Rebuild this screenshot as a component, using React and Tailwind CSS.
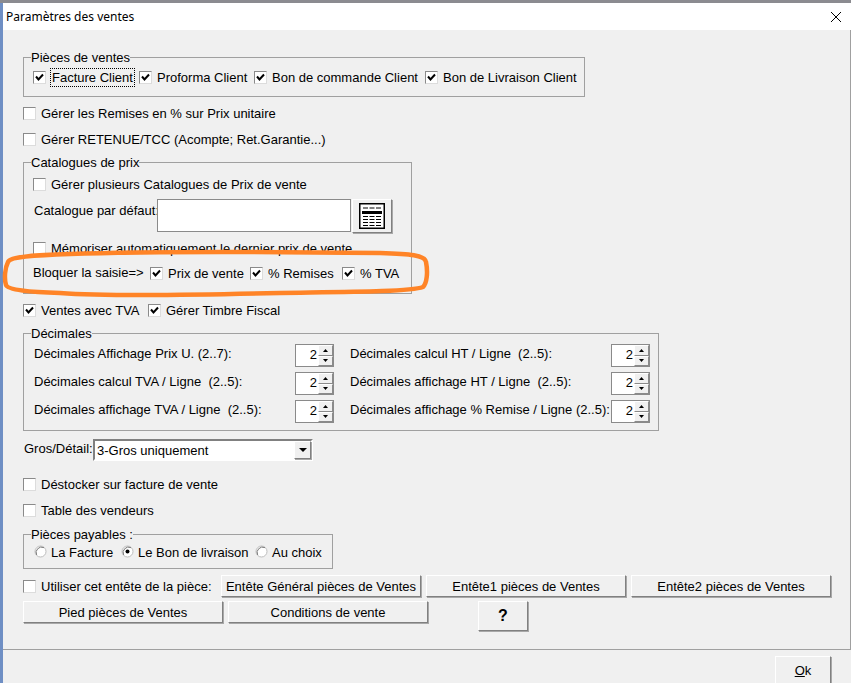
const FONT = { fontFamily: '"Liberation Sans", Arial, sans-serif' };

function Box({ checked }) {
  return (
    <span className="shrink-0 w-[13px] h-[13px] bg-white border border-t-[#8a8a8a] border-l-[#8a8a8a] border-r-[#dcdcdc] border-b-[#dcdcdc] flex items-center justify-center">
      {checked && (
        <svg width="9" height="9" viewBox="0 0 9 9">
          <path d="M1 3.5 L3.5 6.5 L8 1.5" fill="none" stroke="#000" strokeWidth="2" />
        </svg>
      )}
    </span>
  );
}

function Check({ label, checked, className = "", focus }) {
  return (
    <label className={"flex items-center h-5 whitespace-nowrap shrink-0 " + className}>
      <Box checked={checked} />
      {focus ? (
        <span className="ml-1 h-[19px] px-px pt-px flex items-center border border-dotted border-black">{label}</span>
      ) : (
        <span className="ml-[5px] pt-px">{label}</span>
      )}
    </label>
  );
}

function Radio({ label, checked, className = "" }) {
  return (
    <label className={"flex items-center h-5 whitespace-nowrap shrink-0 " + className}>
      <svg width="13" height="13" viewBox="0 0 13 13" className="shrink-0 -mt-[2px]">
        <circle cx="6.5" cy="6.5" r="5.5" fill="#fff" stroke="#bdbdbd" />
        <path d="M2.6 9.9 A5.5 5.5 0 0 1 9.9 2.6" fill="none" stroke="#777" />
        {checked && <circle cx="6.5" cy="6.5" r="2" fill="#000" />}
      </svg>
      <span className="ml-1 pt-px">{label}</span>
    </label>
  );
}

function Group({ title, className = "", inner = "pl-[9px]", children }) {
  return (
    <fieldset className={"border border-[#a0a0a0] " + className}>
      <legend className="ml-[7px] h-[15px] leading-[15px] whitespace-nowrap">{title}</legend>
      <div className={inner}>{children}</div>
    </fieldset>
  );
}

function Btn({ children, className = "" }) {
  return (
    <button className={"shrink-0 bg-[#f0f0f0] border border-t-white border-l-white border-r-[#808080] border-b-[#808080] shadow-[1px_1px_0_#a8a8a8] whitespace-nowrap flex items-center justify-center " + className}>
      {children}
    </button>
  );
}

function Spinner() {
  return (
    <div className="w-[39px] h-[23px] bg-white border border-[#8a8a8a] flex">
      <span className="flex-1 text-right pr-px leading-[20px]">2</span>
      <div className="w-[15px] flex flex-col">
        {[0, 1].map((i) => (
          <span key={i} className="flex-1 bg-[#f0f0f0] border border-t-white border-l-white border-r-[#8a8a8a] border-b-[#8a8a8a] flex items-center justify-center">
            <svg width="5" height="3" viewBox="0 0 5 3">
              <path d={i === 0 ? "M2.5 0 L5 3 L0 3 Z" : "M0 0 L5 0 L2.5 3 Z"} fill="#000" />
            </svg>
          </span>
        ))}
      </div>
    </div>
  );
}

function DecRow({ a, b }) {
  return (
    <>
      <span className="whitespace-pre pb-1 self-center">{a}</span>
      <Spinner />
      <span className="whitespace-pre pb-1 pl-4 self-center">{b}</span>
      <Spinner />
    </>
  );
}

export default function App() {
  return (
    <div className="w-[851px] h-[683px] overflow-hidden relative flex flex-col bg-[#f0f0f0] text-black text-[13px]" style={FONT}>
      <div className="h-[3px] bg-[#8b8b90] shrink-0" />
      <div className="flex-1 flex flex-col border-l-[3px] border-l-[#6f8fc4]">
        <div className="h-[27px] bg-white flex items-center justify-between pl-[3px] pr-[9px] shrink-0">
          <span className="text-[12px]" style={{ fontFamily: '"Noto Sans", "Open Sans", sans-serif' }}>Paramètres des ventes</span>
          <svg width="12" height="12" viewBox="0 0 12 12">
            <path d="M1 1 L11 11 M11 1 L1 11" stroke="#000" strokeWidth="1" />
          </svg>
        </div>

        <div className="h-[620px] shrink-0 flex flex-col pl-5 border-r border-b border-[#a0a0a0]">
          <Group title="Pièces de ventes" className="mt-5 w-[562px] h-[47px]">
            <div className="flex mt-[2px]">
              <Check checked focus label="Facture Client" className="w-[106px]" />
              <Check checked label="Proforma Client" className="w-[115px]" />
              <Check checked label="Bon de commande Client" className="w-[171px]" />
              <Check checked label="Bon de Livraison Client" />
            </div>
          </Group>

          <Check label="Gérer les Remises en % sur Prix unitaire" className="mt-[6px]" />
          <Check label="Gérer RETENUE/TCC (Acompte; Ret.Garantie...)" className="mt-[6px]" />

          <Group title="Catalogues de prix" className="mt-[6px] w-[389px] h-[139px]">
            <Check label="Gérer plusieurs Catalogues de Prix de vente" className="mt-1" />
            <div className="flex mt-[5px] h-[34px]">
              <span className="w-[124px] pl-px pt-[2px] whitespace-nowrap">Catalogue par défaut:</span>
              <div className="w-[194px] h-[33px] bg-white border border-[#8a8a8a]" />
              <Btn className="ml-px w-10 h-[34px]">
                <svg width="26" height="26" viewBox="0 0 26 26">
                  <rect x="0.75" y="0.75" width="24.5" height="24.5" fill="#fff" stroke="#000" strokeWidth="1.5" />
                  <path d="M4 5H22" stroke="#000" strokeWidth="1" strokeDasharray="5 1.5" />
                  <rect x="3" y="8" width="20" height="3" fill="#000" />
                  <path d="M4 13.5H22M4 16.5H22M4 19.5H22M4 22.5H22" stroke="#000" strokeWidth="1" strokeDasharray="5 1.5" />
                </svg>
              </Btn>
            </div>
            <Check label="Mémoriser automatiquement le dernier prix de vente" className="mt-[5px]" />
            <div className="flex items-center h-5 mt-[5px]">
              <span className="w-[117px] whitespace-nowrap pb-px">Bloquer la saisie=&gt;</span>
              <Check checked label="Prix de vente" className="w-[100px]" />
              <Check checked label="% Remises" className="w-[92px]" />
              <Check checked label="% TVA" />
            </div>
          </Group>

          <div className="flex mt-[6px]">
            <Check checked label="Ventes avec TVA" className="w-[125px]" />
            <Check checked label="Gérer Timbre Fiscal" />
          </div>

          <Group title="Décimales" inner="pl-[10px]" className="mt-[6px] w-[636px] h-[105px]">
            <div className="grid grid-cols-[261px_39px_277px_39px] auto-rows-[23px] gap-y-[5px] mt-[3px]">
              <DecRow a="Décimales Affichage Prix U. (2..7):" b="Décimales calcul HT / Ligne  (2..5):" />
              <DecRow a="Décimales calcul TVA / Ligne  (2..5):" b="Décimales affichage HT / Ligne  (2..5):" />
              <DecRow a="Décimales affichage TVA / Ligne  (2..5):" b="Décimales affichage % Remise / Ligne (2..5):" />
            </div>
          </Group>

          <div className="flex mt-2 h-[22px] ml-px">
            <span className="w-[69px] whitespace-nowrap">Gros/Détail:</span>
            <div className="w-[220px] h-[22px] bg-white border-2 border-t-[#808080] border-l-[#808080] border-r-white border-b-white flex items-center justify-between">
              <span className="pl-[2px] pt-px">3-Gros uniquement</span>
              <Btn className="w-[17px] h-[18px]">
                <svg width="8" height="4" viewBox="0 0 8 4">
                  <path d="M0 0H8L4 4Z" fill="#000" />
                </svg>
              </Btn>
            </div>
          </div>

          <Check label="Déstocker sur facture de vente" className="mt-[13px]" />
          <Check label="Table des vendeurs" className="mt-[6px]" />

          <Group title="Pièces payables :" inner="pl-[10px]" className="mt-[7px] w-[310px] h-[42px]">
            <div className="flex">
              <Radio label="La Facture" className="w-[87px]" />
              <Radio checked label="Le Bon de livraison" className="w-[134px]" />
              <Radio label="Au choix" />
            </div>
          </Group>

          <div className="flex items-center mt-[6px] h-[22px]">
            <Check label="Utiliser cet entête de la pièce:" className="w-[198px]" />
            <Btn className="w-[200px] h-[22px] pt-px">Entête Général pièces de Ventes</Btn>
            <Btn className="w-[200px] h-[22px] pt-px ml-[5px]">Entête1 pièces de Ventes</Btn>
            <Btn className="w-[200px] h-[22px] pt-px ml-[5px]">Entête2 pièces de Ventes</Btn>
          </div>
          <div className="flex items-start mt-1">
            <Btn className="w-[200px] h-[22px] pt-px">Pied pièces de Ventes</Btn>
            <Btn className="w-[200px] h-[22px] pt-px ml-[5px]">Conditions de vente</Btn>
            <Btn className="w-[50px] h-[30px] ml-[50px] font-bold text-[16px]">?</Btn>
          </div>
        </div>

        <div className="flex justify-end pr-5 pt-[6px]">
          <Btn className="w-[56px] h-[30px]"><span><u>O</u>k</span></Btn>
        </div>
      </div>

      <svg className="absolute left-0 top-[245px] pointer-events-none" width="432" height="55" viewBox="0 245 432 55">
        <path d="M8 262 C10 256 40 255 70 254 C150 251 300 252 380 253 C410 254 425 255 426 262 C428 272 427 283 423 287 C410 292 340 292 280 293 C200 295 100 296 60 293 C30 292 8 290 6 285 C4 278 5 268 8 262 Z" fill="none" stroke="#ff8427" strokeWidth="4.5" />
      </svg>
    </div>
  );
}
